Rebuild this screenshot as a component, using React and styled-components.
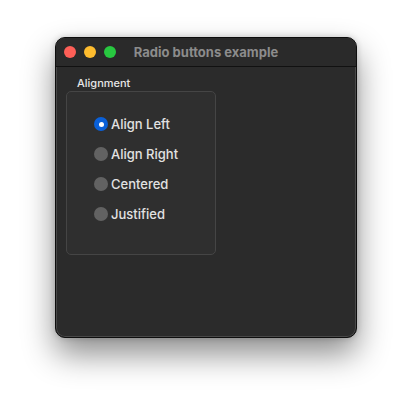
import React, { useState } from "react";
import styled, { createGlobalStyle } from "styled-components";

const Global = createGlobalStyle`
  html, body { margin: 0; padding: 0; background: #ffffff; }
  body { font-family: Inter, "Liberation Sans", sans-serif; }
`;

const Page = styled.div`
  width: 412px;
  height: 412px;
  box-sizing: border-box;
  padding: 37px 0 0 55px;
  background: #ffffff;
`;

const Window = styled.div`
  width: 302px;
  height: 301px;
  box-sizing: border-box;
  border: 1px solid #0e0e0e;
  border-radius: 10px;
  background: #2b2b2b;
  box-shadow: inset 0 0 0 1px rgba(255, 255, 255, 0.14), 0 16px 32px rgba(0, 0, 0, 0.45),
    0 0 6px rgba(0, 0, 0, 0.18);
  display: flex;
  flex-direction: column;
  overflow: hidden;
`;

const TitleBar = styled.div`
  height: 28px;
  flex: none;
  display: flex;
  align-items: center;
  position: relative;
  border-bottom: 1px solid #111111;
  background: #2a2a2a;
  padding-left: 8px;
  gap: 8px;
`;

const Light = styled.span`
  width: 12px;
  height: 12px;
  border-radius: 50%;
  background: ${(p) => p.$c};
  flex: none;
`;

const Title = styled.div`
  position: absolute;
  left: 0;
  right: 0;
  top: 0;
  bottom: 0;
  display: flex;
  align-items: center;
  justify-content: center;
  font-size: 13px;
  font-weight: 700;
  color: #8c8c8c;
  pointer-events: none;
`;

const Content = styled.div`
  flex: 1;
  padding: 9px 0 0 10px;
  display: flex;
  flex-direction: column;
  align-items: flex-start;
`;

const GroupLabel = styled.div`
  font-size: 11px;
  line-height: 14px;
  font-weight: 500;
  color: #e6e6e6;
  margin-left: 11px;
  margin-bottom: 1px;
`;

const GroupBox = styled.div`
  width: 150px;
  height: 164px;
  box-sizing: border-box;
  border: 1px solid #454545;
  border-radius: 5px;
  background: #2f2f2f;
  padding: 17px 0 0 27px;
  display: flex;
  flex-direction: column;
`;

const Row = styled.label`
  height: 30px;
  display: flex;
  align-items: center;
  gap: 3px;
  cursor: default;
  font-size: 13px;
  font-weight: 500;
  color: #e2e2e2;
`;

const Dot = styled.span`
  width: 14px;
  height: 14px;
  border-radius: 50%;
  box-sizing: border-box;
  background: ${(p) => (p.$on ? "#0a60d8" : "#626262")};
  display: flex;
  align-items: center;
  justify-content: center;
  flex: none;
  &::after {
    content: "";
    width: 5px;
    height: 5px;
    border-radius: 50%;
    background: #ffffff;
    display: ${(p) => (p.$on ? "block" : "none")};
  }
`;

const options = ["Align Left", "Align Right", "Centered", "Justified"];

export default function App() {
  const [sel, setSel] = useState(0);
  return (
    <Page>
      <Global />
      <Window>
        <TitleBar>
          <Light $c="#fe5f57" />
          <Light $c="#febc2e" />
          <Light $c="#28c840" />
          <Title>Radio buttons example</Title>
        </TitleBar>
        <Content>
          <GroupLabel>Alignment</GroupLabel>
          <GroupBox>
            {options.map((o, i) => (
              <Row key={o} onClick={() => setSel(i)}>
                <Dot $on={sel === i} />
                {o}
              </Row>
            ))}
          </GroupBox>
        </Content>
      </Window>
    </Page>
  );
}
